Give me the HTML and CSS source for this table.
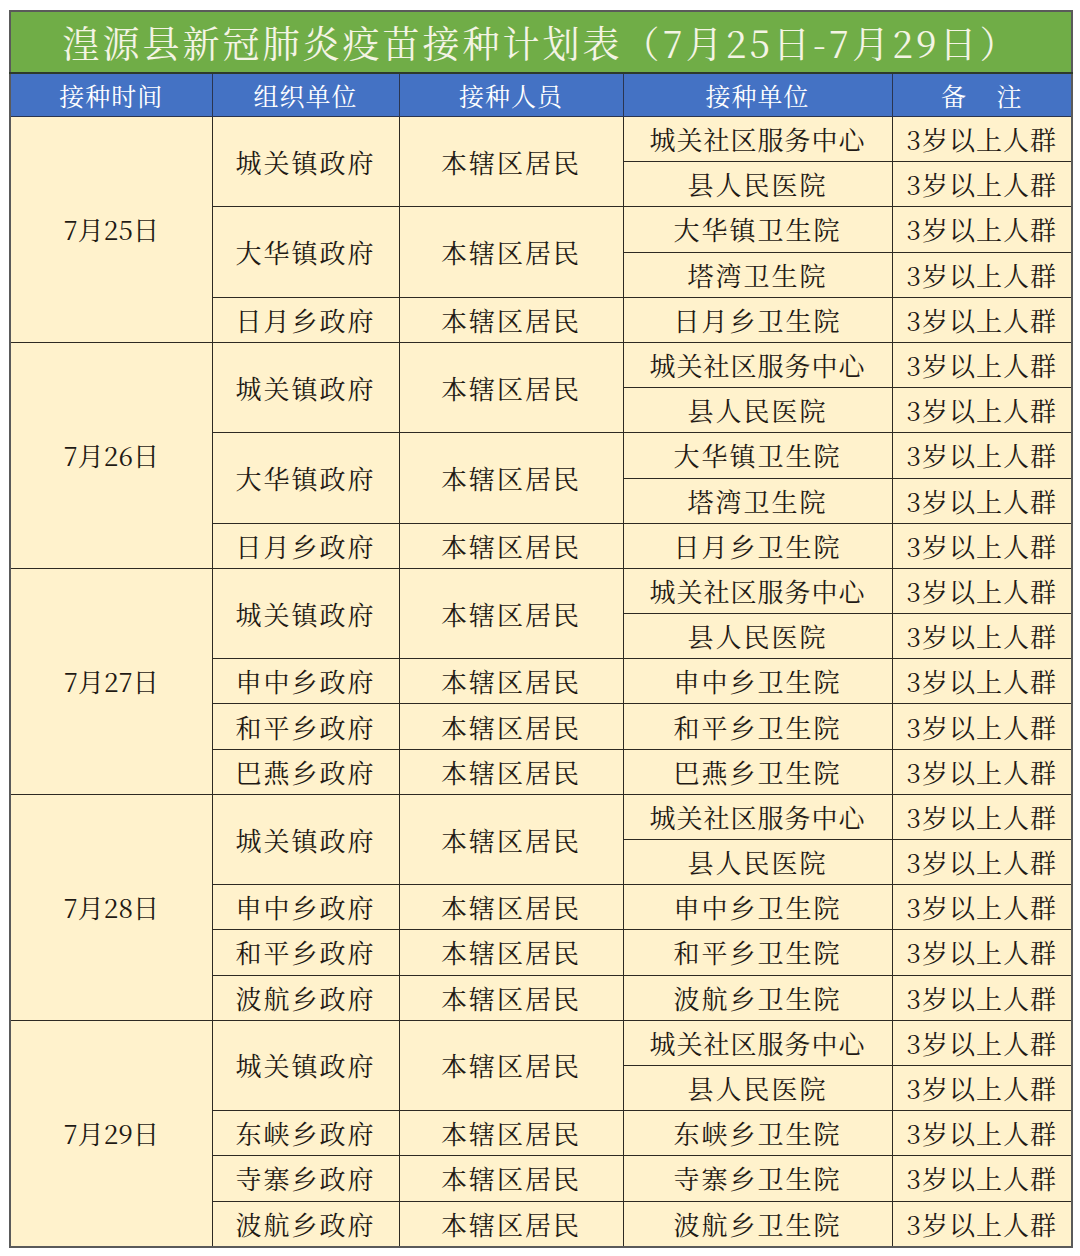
FILE: index.html
```html
<!DOCTYPE html>
<html lang="zh">
<head>
<meta charset="utf-8">
<title>湟源县新冠肺炎疫苗接种计划表</title>
<link rel="stylesheet" href="styles.css">
</head>
<body>
<table class="plan">
<colgroup>
<col class="c1"><col class="c2"><col class="c3"><col class="c4"><col class="c5">
</colgroup>
<thead>
<tr class="title-row"><th colspan="5" class="title">湟源县新冠肺炎疫苗接种计划表（7月25日-7月29日）</th></tr>
<tr class="head-row"><th>接种时间</th><th>组织单位</th><th>接种人员</th><th>接种单位</th><th>备&nbsp;&nbsp;&nbsp;&nbsp;注</th></tr>
</thead>
<tbody>
<tr><td rowspan="5" class="date">7月25日</td><td rowspan="2">城关镇政府</td><td rowspan="2">本辖区居民</td><td class="unit">城关社区服务中心</td><td class="note">3岁以上人群</td></tr>
<tr><td>县人民医院</td><td class="note">3岁以上人群</td></tr>
<tr><td rowspan="2">大华镇政府</td><td rowspan="2">本辖区居民</td><td>大华镇卫生院</td><td class="note">3岁以上人群</td></tr>
<tr><td>塔湾卫生院</td><td class="note">3岁以上人群</td></tr>
<tr><td>日月乡政府</td><td>本辖区居民</td><td>日月乡卫生院</td><td class="note">3岁以上人群</td></tr>

<tr><td rowspan="5" class="date">7月26日</td><td rowspan="2">城关镇政府</td><td rowspan="2">本辖区居民</td><td class="unit">城关社区服务中心</td><td class="note">3岁以上人群</td></tr>
<tr><td>县人民医院</td><td class="note">3岁以上人群</td></tr>
<tr><td rowspan="2">大华镇政府</td><td rowspan="2">本辖区居民</td><td>大华镇卫生院</td><td class="note">3岁以上人群</td></tr>
<tr><td>塔湾卫生院</td><td class="note">3岁以上人群</td></tr>
<tr><td>日月乡政府</td><td>本辖区居民</td><td>日月乡卫生院</td><td class="note">3岁以上人群</td></tr>

<tr><td rowspan="5" class="date">7月27日</td><td rowspan="2">城关镇政府</td><td rowspan="2">本辖区居民</td><td class="unit">城关社区服务中心</td><td class="note">3岁以上人群</td></tr>
<tr><td>县人民医院</td><td class="note">3岁以上人群</td></tr>
<tr><td>申中乡政府</td><td>本辖区居民</td><td>申中乡卫生院</td><td class="note">3岁以上人群</td></tr>
<tr><td>和平乡政府</td><td>本辖区居民</td><td>和平乡卫生院</td><td class="note">3岁以上人群</td></tr>
<tr><td>巴燕乡政府</td><td>本辖区居民</td><td>巴燕乡卫生院</td><td class="note">3岁以上人群</td></tr>

<tr><td rowspan="5" class="date">7月28日</td><td rowspan="2">城关镇政府</td><td rowspan="2">本辖区居民</td><td class="unit">城关社区服务中心</td><td class="note">3岁以上人群</td></tr>
<tr><td>县人民医院</td><td class="note">3岁以上人群</td></tr>
<tr><td>申中乡政府</td><td>本辖区居民</td><td>申中乡卫生院</td><td class="note">3岁以上人群</td></tr>
<tr><td>和平乡政府</td><td>本辖区居民</td><td>和平乡卫生院</td><td class="note">3岁以上人群</td></tr>
<tr><td>波航乡政府</td><td>本辖区居民</td><td>波航乡卫生院</td><td class="note">3岁以上人群</td></tr>

<tr><td rowspan="5" class="date">7月29日</td><td rowspan="2">城关镇政府</td><td rowspan="2">本辖区居民</td><td class="unit">城关社区服务中心</td><td class="note">3岁以上人群</td></tr>
<tr><td>县人民医院</td><td class="note">3岁以上人群</td></tr>
<tr><td>东峡乡政府</td><td>本辖区居民</td><td>东峡乡卫生院</td><td class="note">3岁以上人群</td></tr>
<tr><td>寺寨乡政府</td><td>本辖区居民</td><td>寺寨乡卫生院</td><td class="note">3岁以上人群</td></tr>
<tr><td>波航乡政府</td><td>本辖区居民</td><td>波航乡卫生院</td><td class="note">3岁以上人群</td></tr>
</tbody>
</table>
</body>
</html>
```

FILE: styles.css
```css
html, body {
  margin: 0;
  padding: 0;
  background: #ffffff;
}
body {
  padding: 10px 9px 0 9px;
  font-family: "Noto Serif CJK SC", "Noto Sans CJK SC", "Liberation Serif", serif;
}
.plan {
  width: 1062px;
  border-collapse: collapse;
  table-layout: fixed;
  border: 2px solid #5a5a5a;
}
.c1 { width: 202px; }
.c2 { width: 187px; }
.c3 { width: 224px; }
.c4 { width: 269px; }
.c5 { width: 180px; }
.plan th, .plan td {
  border: 1px solid #2e2a22;
  padding: 0;
  text-align: center;
  vertical-align: middle;
  white-space: nowrap;
  overflow: hidden;
}
.title-row th.title {
  height: 60px;
  background: #70ad47;
  color: #f4f4e4;
  font-size: 37px;
  font-weight: 400;
  letter-spacing: 3px;
  border-color: #5a8f38;
  border-bottom: 2px solid #2e3a2a;
  line-height: 1;
}
.head-row th {
  height: 42px;
  background: #4472c4;
  color: #ffffff;
  font-size: 25px;
  font-weight: 400;
  letter-spacing: 1px;
  border-color: #2a3550;
  line-height: 1;
}
.plan tbody td {
  height: 44.2px;
  background: #fff2cc;
  color: #1f1a14;
  font-size: 26px;
  letter-spacing: 2px;
  line-height: 1;
}
.plan tbody td.date {
  letter-spacing: 0;
}
.plan tbody td.unit {
  letter-spacing: 1px;
}
.plan tbody td.note {
  letter-spacing: 1px;
}
```
